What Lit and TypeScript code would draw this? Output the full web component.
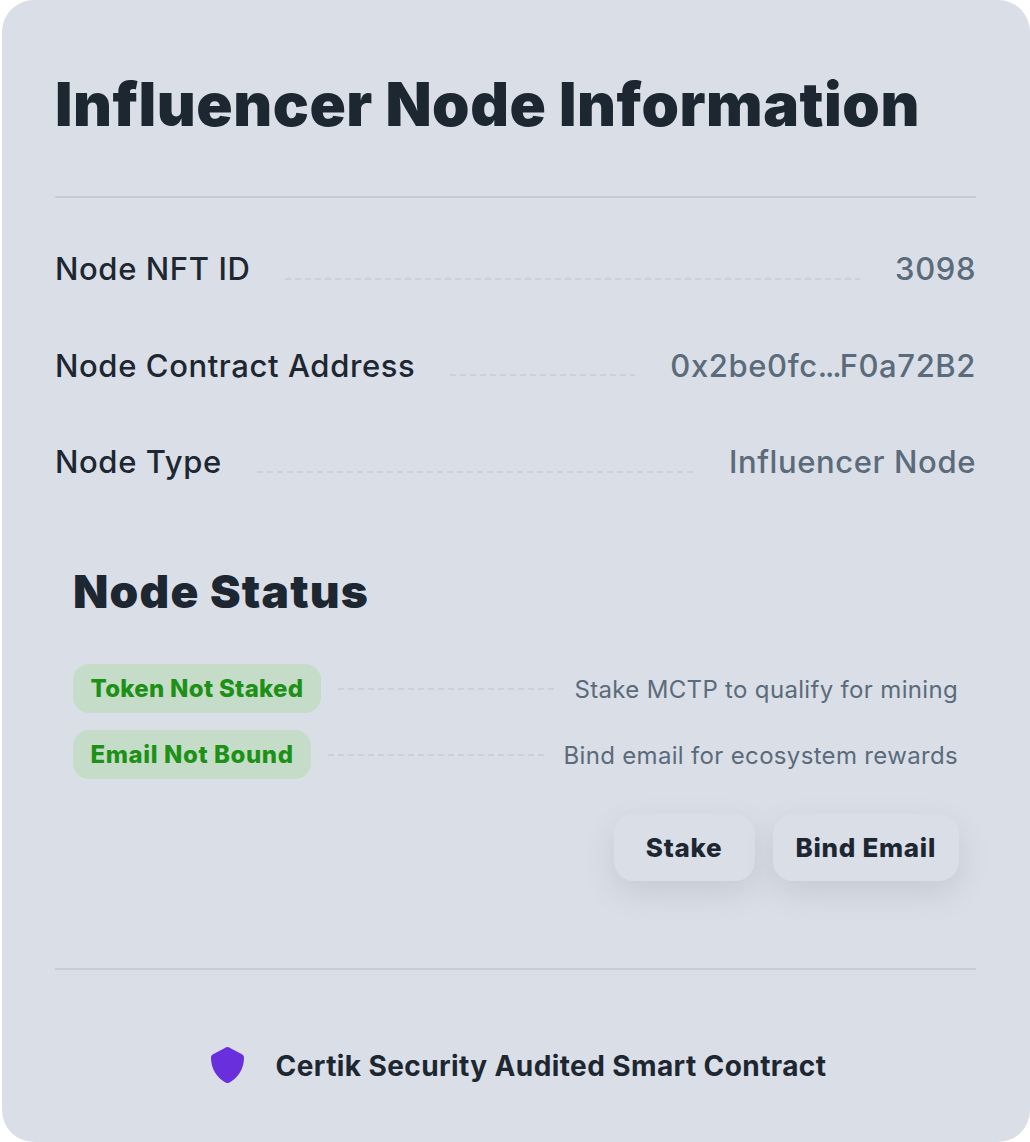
import { LitElement, html, css } from "lit";
import { customElement } from "lit/decorators.js";

@customElement("app-root")
export class AppRoot extends LitElement {
  static styles = css`
    :host { display: block; width: 1030px; height: 1142px; background: #fff; font-family: Inter, "Noto Sans", sans-serif; color: #1d2732; }
    .card { box-sizing: border-box; height: 1142px; margin-left: 2px; background: #dadee6; border-radius: 32px; padding: 0 54px 0 53px; display: flex; flex-direction: column; }
    h1 { margin: 0; height: 196px; box-sizing: border-box; padding-top: 68px; font-size: 60px; line-height: 72px; font-weight: 900; letter-spacing: 0.55px; white-space: nowrap; }
    .rule { height: 2px; background: #c8ccd6; flex: none; }
    .rows { padding-top: 50px; display: flex; flex-direction: column; gap: 54.5px; }
    .row { display: flex; align-items: center; gap: 35px; height: 42px; font-size: 31px; font-weight: 450; letter-spacing: 0.6px; line-height: 42px; white-space: nowrap; }
    .dash { flex: 1; height: 2px; background: repeating-linear-gradient(90deg, #ccd0d7 0 6px, transparent 6px 10px); }
    .row .dash { margin-top: 19px; }
    .row .v { color: #5a6b7b; }
    .dots { letter-spacing: -2.1px; }
    .status { padding: 0 18px; }
    h2 { margin: 76px 0 41px; font-size: 46px; line-height: 64px; font-weight: 900; letter-spacing: 1.2px; white-space: nowrap; }
    .items { display: flex; flex-direction: column; gap: 17px; }
    .item { display: flex; align-items: center; gap: 17px; white-space: nowrap; }
    .tag { height: 49px; padding: 0 17.5px; background: #c5dcc8; border-radius: 16px; color: #1c9116; font-size: 24px; line-height: 49px; font-weight: 800; box-sizing: border-box; }
    .item:nth-child(1) .tag { letter-spacing: 0.3px; }
    .item:nth-child(2) .tag { letter-spacing: 0.6px; }
    .item .d { font-size: 24px; letter-spacing: 0.33px; color: #5a6b7b; height: 49px; line-height: 51px; }
    .btns { display: flex; justify-content: flex-end; gap: 18px; margin: 35px -1px 0 0; }
    .btn { border: 0; height: 67px; min-width: 141px; padding: 0 23px; background: #dadee6; border-radius: 20px; font: 800 26px Inter, sans-serif; letter-spacing: 0.7px; color: #1d2732; box-shadow: 0 12px 30px rgba(100, 110, 125, 0.16); }
    .rule.b { margin-top: 87px; }
    .foot { flex: 1; display: flex; align-items: center; justify-content: center; gap: 32px; font-size: 28px; letter-spacing: 0.4px; font-weight: 700; padding: 20px 0 0 6px; white-space: nowrap; }
    svg { width: 33px; height: 36px; display: block; margin-top: -2px; }
  `;
  render() {
    const rows = [
      ["Node NFT ID", html`3098`],
      ["Node Contract Address", html`0x2be0fc<span class="dots">...</span>F0a72B2`],
      ["Node Type", html`Influencer Node`],
    ];
    const items = [["Token Not Staked", "Stake MCTP to qualify for mining"], ["Email Not Bound", "Bind email for ecosystem rewards"]];
    return html`<div class="card">
      <h1>Influencer Node Information</h1>
      <div class="rule"></div>
      <div class="rows">
        ${rows.map(([k, v]) => html`<div class="row"><span>${k}</span><span class="dash"></span><span class="v">${v}</span></div>`)}
      </div>
      <div class="status">
        <h2>Node Status</h2>
        <div class="items">
          ${items.map(([k, v]) => html`<div class="item"><span class="tag">${k}</span><span class="dash"></span><span class="d">${v}</span></div>`)}
        </div>
        <div class="btns"><button class="btn">Stake</button><button class="btn">Bind Email</button></div>
      </div>
      <div class="rule b"></div>
      <div class="foot">
        <svg viewBox="0 0 33 36"><path fill="#6a2fdc" d="M16.5 0C18 0 19 .8 20 1.4L31 7.2C32.4 8 33 9 33 10.5C33 22 27 31 18.5 35.4C17 36.2 16 36.2 14.5 35.4C6 31 0 22 0 10.5C0 9 .6 8 2 7.2L13 1.4C14 .8 15 0 16.5 0Z"/></svg>
        <span>Certik Security Audited Smart Contract</span>
      </div>
    </div>`;
  }
}
